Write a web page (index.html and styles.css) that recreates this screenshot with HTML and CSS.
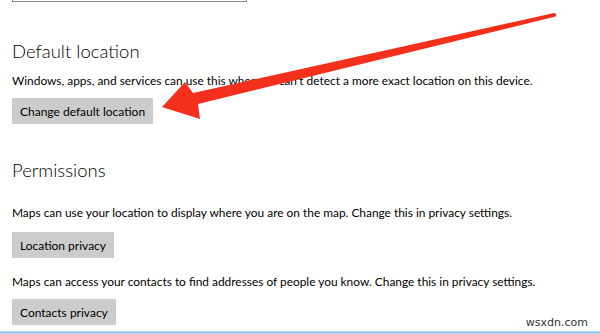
FILE: index.html
```html
<!DOCTYPE html>
<html>
<head>
<meta charset="utf-8">
<link rel="stylesheet" href="styles.css">
</head>
<body>
<div class="page">
  <div class="content">
    <div class="top-box"></div>
    <h2 class="heading first">Default location</h2>
    <p class="desc d1">Windows, apps, and services can use this when we can't detect a more exact location on this device.</p>
    <button class="btn b1">Change default location</button>
    <h2 class="heading second">Permissions</h2>
    <p class="desc d2">Maps can use your location to display where you are on the map. Change this in privacy settings.</p>
    <button class="btn b2">Location privacy</button>
    <p class="desc d3">Maps can access your contacts to find addresses of people you know. Change this in privacy settings.</p>
    <button class="btn b3">Contacts privacy</button>
  </div>
  <div class="bottom-line"></div>
  <div class="watermark">wsxdn.com</div>
  <svg class="arrow" width="600" height="334" viewBox="0 0 600 334">
    <polygon fill="#f4301c" points="554,13 556.5,14.2 555.6,16.6 198,104 200,119 162,107 185,82 193,93"/>
  </svg>
</div>
</body>
</html>
```
FILE: styles.css
```css
* { box-sizing: border-box; }
html, body { margin: 0; padding: 0; background: #fff; }
.page {
  position: relative;
  width: 600px;
  height: 334px;
  overflow: hidden;
  font-family: "Segoe UI", "Lato", "Open Sans", sans-serif;
  color: #000;
}
.content {
  padding-left: 12px;
  display: flex;
  flex-direction: column;
  align-items: flex-start;
}
.top-box {
  width: 235px;
  height: 2px;
  border: 1px solid #8c8c8c;
  border-top: none;
}
.heading {
  margin: 0;
  font-size: 18.5px;
  font-weight: 300;
  line-height: 28px;
  color: #000;
}
.heading.first { margin-top: 35px; }
.heading.second { margin-top: 32px; }
.desc {
  margin: 0;
  font-size: 11.9px;
  line-height: 18px;
  white-space: nowrap;
}
.d1 { margin-top: 7px; }
.d2 { margin-top: 20px; }
.d3 { margin-top: 15px; }
.btn {
  margin-top: 8px;
  height: 26px;
  padding: 0 8px;
  border: none;
  background: #cccccc;
  font-family: inherit;
  font-size: 12px;
  color: #000;
}
.b2 { margin-top: 10px; }
.b3 { margin-top: 8px; }
.bottom-line {
  position: absolute;
  left: 0;
  right: 0;
  bottom: 0;
  height: 3px;
  background: #a9cfee;
}
.watermark {
  position: absolute;
  right: 12px;
  bottom: 5px;
  font-family: "DejaVu Sans", sans-serif;
  font-size: 11px;
  color: #333;
}
.arrow {
  position: absolute;
  left: 0;
  top: 0;
}
```
